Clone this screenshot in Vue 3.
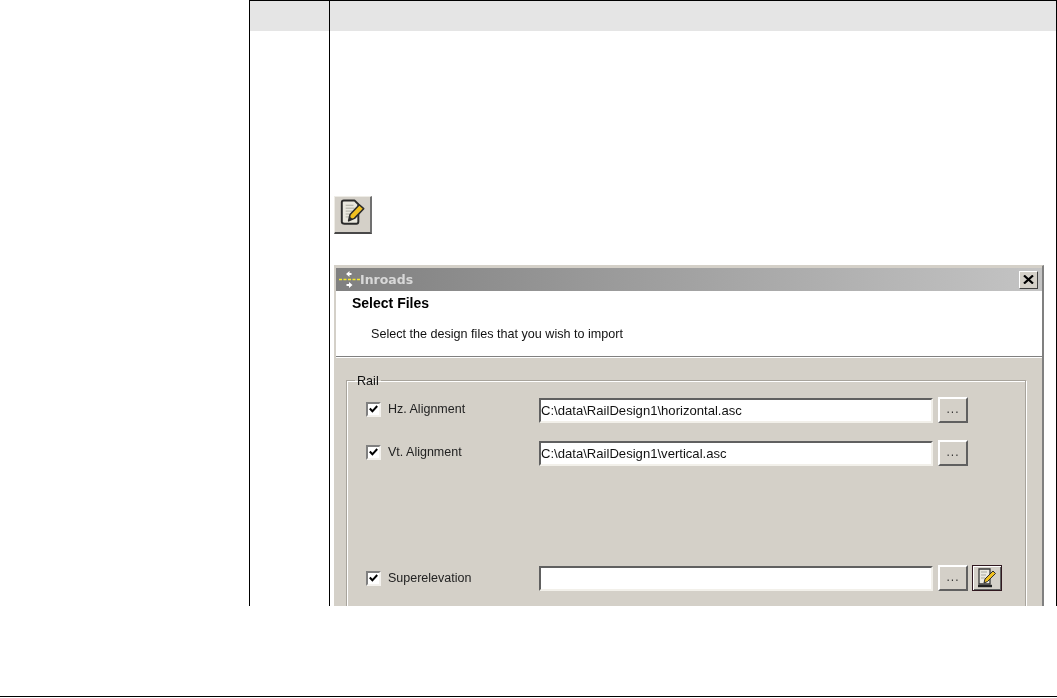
<template>
  <div class="page">
    <div class="doc-table">
      <div class="head-row">
        <div class="cell-num"></div>
        <div class="cell-body"></div>
      </div>
      <div class="body-row">
        <div class="cell-num"></div>
        <div class="cell-body">
          <button class="edit-btn" type="button">
            <svg width="36" height="35" viewBox="0 0 36 35">
              <path d="M9 3h11l4 4v18q0 2-2 2H10q-3 0-3-2V5q0-2 2-2z" fill="#e9e7de" stroke="#2b2b2b" stroke-width="2" stroke-linejoin="round" />
              <path d="M11 8h8M11 11h9M11 14h7M11 17h5M11 20h4" stroke="#a9a9a0" stroke-width="1" />
              <path d="M14 24l1.500-6.500L25 7.500l4.500 4-9.500 10z" fill="#f0c020" stroke="#2b2b2b" stroke-width="1.600" stroke-linejoin="round" />
              <path d="M14 24l1-4.500 3.500 3z" fill="#2b2b2b" />
            </svg>
          </button>

          <!-- Inroads dialog -->
          <div class="dialog">
            <div class="titlebar">
              <svg class="title-icon" width="26" height="21" viewBox="0 0 26 21">
                <path d="M3 10.500h21" stroke="#f6ea30" stroke-width="1.400" stroke-dasharray="3 1.500" />
                <path d="M13.500 2L10 5l3.500 3V6h2V4h-2z" fill="#fff" />
                <path d="M13 13v2h-2.500v2H13v2l3.500-3z" fill="#fff" />
              </svg>
              <span class="title-text">Inroads</span>
              <button class="close-btn" type="button">
                <svg width="11" height="9" viewBox="0 0 11 9">
                  <path d="M1 0.500l9 8M10 0.500l-9 8" stroke="#000" stroke-width="2.200" />
                </svg>
              </button>
            </div>
            <div class="wizard-head">
              <div class="wizard-title">Select Files</div>
              <div class="wizard-sub">Select the design files that you wish to import</div>
            </div>
            <div class="wizard-body">
              <fieldset class="group">
                <legend>Rail</legend>
                <div v-for="row in rows" :key="row.label" class="file-row" :class="row.cls">
                  <span class="check">
                    <svg width="9" height="8" viewBox="0 0 9 8">
                      <path d="M0.800 3.500l2.600 2.800L8.200 1" fill="none" stroke="#000" stroke-width="2" />
                    </svg>
                  </span>
                  <span class="file-label">{{ row.label }}</span>
                  <div class="file-input">{{ row.value }}</div>
                  <button class="browse" type="button">...</button>
                  <button v-if="row.edit" class="mini-edit" type="button">
                    <svg width="24" height="22" viewBox="0 0 24 22">
                      <path d="M4 2h11v15H4z" fill="#eceae2" stroke="#3a3a3a" stroke-width="1.300" />
                      <path d="M3 19h14" stroke="#222" stroke-width="2.400" />
                      <path d="M6 5h6M6 8h5M6 11h4" stroke="#a9a9a0" />
                      <path d="M9 16l1-4 8-8 2.500 2.500-8 8z" fill="#f0c020" stroke="#2b2b2b" />
                    </svg>
                  </button>
                </div>
              </fieldset>
            </div>
          </div>
        </div>
      </div>
    </div>
    <div class="footer-rule"></div>
  </div>
</template>

<script setup>
const rows = [
  { label: 'Hz. Alignment', value: 'C:\\data\\RailDesign1\\horizontal.asc', cls: 'row-hz' },
  { label: 'Vt. Alignment', value: 'C:\\data\\RailDesign1\\vertical.asc', cls: 'row-vt' },
  { label: 'Superelevation', value: '', cls: 'row-super', edit: true }
];
</script>

<style>
html, body {
  margin: 0;
  background: #fff;
}
</style>

<style scoped>
.page {
  height: 698px;
  display: flex;
  flex-direction: column;
  overflow: hidden;
  font-family: 'Liberation Sans', Arial, sans-serif;
  color: #000;
}

.doc-table {
  margin-left: 249px;
  height: 606px;
  border-top: 1px solid #000;
  border-left: 1px solid #000;
  border-right: 1px solid #000;
  box-sizing: border-box;
  display: flex;
  flex-direction: column;
  overflow: hidden;
}

.head-row {
  display: flex;
  height: 30px;
  flex: none;
  background: #e5e5e5;
}

.body-row {
  display: flex;
  flex: 1;
  min-height: 0;
}

.cell-num {
  width: 79px;
  flex: none;
  border-right: 1px solid #000;
}

.cell-body {
  flex: 1;
  min-width: 0;
}

.edit-btn {
  display: flex;
  align-items: center;
  justify-content: center;
  width: 38px;
  height: 38px;
  box-sizing: border-box;
  margin: 165px 0 0 4px;
  padding: 0;
  background: #d4d0c8;
  border-style: solid;
  border-width: 1px 2px 2px 1px;
  border-color: #eeece6 #707070 #484848 #eeece6;
}

.dialog {
  width: 710px;
  height: 342px;
  margin: 31px 0 0 4px;
  box-sizing: border-box;
  background: #d4d0c8;
  border: 1px solid #d4d0c8;
  border-right: 2px solid #808080;
  padding: 2px 0 0 1px;
  filter: blur(0.45px);
}

.titlebar {
  height: 23px;
  display: flex;
  align-items: center;
  background: linear-gradient(90deg, #808080, #c4c4c4);
  padding: 0 4px 0 0;
}

.title-icon {
  flex: none;
}

.title-text {
  font-family: 'DejaVu Sans', sans-serif;
  font-size: 12.500px;
  font-weight: 700;
  color: #d8d8d8;
  margin-left: -2px;
}

.close-btn {
  margin-left: auto;
  width: 19px;
  height: 18px;
  padding: 0;
  display: flex;
  align-items: center;
  justify-content: center;
  background: #d4d0c8;
  border: 1px solid;
  border-color: #fff #404040 #404040 #fff;
}

.wizard-head {
  height: 66px;
  box-sizing: border-box;
  background: #fff;
  border-bottom: 1px solid #808080;
  padding: 5px 0 0 16px;
}

.wizard-title {
  font-size: 14px;
  font-weight: 700;
  line-height: 15px;
}

.wizard-sub {
  font-size: 12.600px;
  line-height: 15px;
  margin: 16px 0 0 19px;
  color: #111;
}

.wizard-body {
  border-top: 1px solid #fff;
  padding: 14px 0 0 10px;
}

.group {
  width: 680px;
  height: 300px;
  box-sizing: border-box;
  margin: 0;
  padding: 0;
  border: 1px solid #a8a49c;
  box-shadow: inset 1px 1px 0 #fff, 1px 1px 0 #fff;
}

.group legend {
  font-size: 12.600px;
  line-height: 14px;
  margin-left: 8px;
  padding: 2px 2px 0;
  color: #111;
}

.file-row {
  display: flex;
  align-items: center;
  height: 26px;
  padding-left: 19px;
}

.row-hz {
  margin-top: 9px;
}

.row-vt {
  margin-top: 17px;
}

.row-super {
  margin-top: 99px;
}

.row-hz .check,
.row-hz .file-label,
.row-vt .check,
.row-vt .file-label {
  margin-bottom: 2px;
}

.check {
  width: 15px;
  height: 15px;
  box-sizing: border-box;
  flex: none;
  display: flex;
  align-items: center;
  justify-content: center;
  background: #fff;
  border: 2px solid;
  border-color: #808080 #f4f2ee #f4f2ee #808080;
}

.file-label {
  width: 151px;
  flex: none;
  margin-left: 7px;
  font-size: 12.500px;
  color: #222;
}

.file-input {
  width: 394px;
  height: 25px;
  flex: none;
  box-sizing: border-box;
  background: #fff;
  border: 2px solid;
  border-color: #606060 #f2f0ea #f2f0ea #606060;
  padding-left: 0;
  font-size: 13.100px;
  line-height: 21px;
  color: #111;
}

.browse {
  width: 30px;
  height: 26px;
  flex: none;
  margin-left: 5px;
  padding: 0 0 2px;
  background: #d4d0c8;
  border: 2px solid;
  border-color: #fff #606060 #606060 #fff;
  font-family: 'Liberation Sans', Arial, sans-serif;
  font-size: 12px;
  letter-spacing: 1px;
  color: #333;
}

.mini-edit {
  width: 30px;
  height: 26px;
  flex: none;
  margin-left: 4px;
  padding: 0;
  display: flex;
  align-items: center;
  justify-content: center;
  background: #d4d0c8;
  border: 1px solid #301820;
  box-shadow: inset 1px 1px 0 #fff, inset -1px -1px 0 #606060;
}

.footer-rule {
  margin-top: 90px;
  height: 1px;
  background: #000;
  flex: none;
}
</style>
